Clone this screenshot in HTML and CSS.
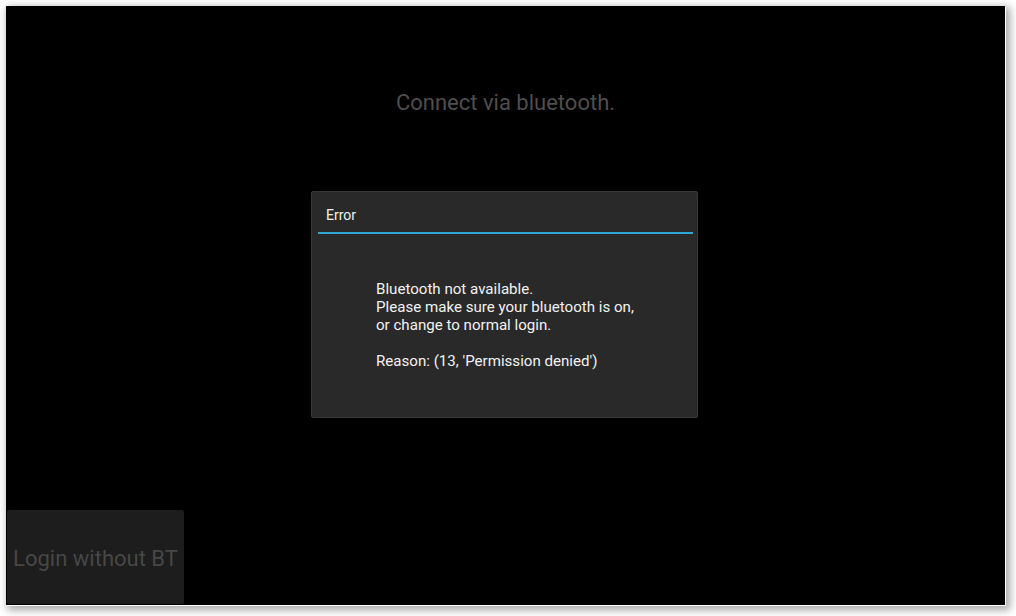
FILE: index.html
```html
<!DOCTYPE html>
<html>
<head>
<meta charset="utf-8">
<link rel="stylesheet" href="styles.css">
</head>
<body>
<div class="window">
  <div class="heading">Connect via bluetooth.</div>
  <div class="spacer"></div>
  <div class="footer">
    <button class="login-btn">Login without BT</button>
  </div>
  <div class="popup">
    <div class="popup-title">Error</div>
    <div class="popup-sep"></div>
    <div class="popup-body">
      <p>Bluetooth not available.<br>Please make sure your bluetooth is on,<br>or change to normal login.</p>
      <p>Reason: (13, 'Permission denied')</p>
    </div>
  </div>
</div>
</body>
</html>
```
FILE: styles.css
```css
html, body {
  margin: 0;
  padding: 0;
  background: #ffffff;
}
body {
  width: 1016px;
  height: 616px;
  overflow: hidden;
  font-family: Roboto, "Noto Sans", sans-serif;
}
.window {
  position: relative;
  margin: 6px 0 0 6px;
  width: 999px;
  height: 599px;
  background: #000;
  display: flex;
  flex-direction: column;
  box-shadow: 1px 1px 0 0 #ffffff, 3px 3px 8px 2px rgba(0,0,0,0.35);
}
.heading {
  margin-top: 82px;
  text-align: center;
  font-size: 22px;
  line-height: 30px;
  color: #4e4e4e;
}
.spacer { flex: 1; }
.footer {
  display: flex;
  padding: 0 0 1px 1px;
}
.login-btn {
  width: 177px;
  height: 94px;
  margin: 0;
  padding: 2px 0 0 0;
  border: none;
  border-radius: 2px;
  background: #1d1d1d;
  color: #474747;
  font-family: Roboto, "Noto Sans", sans-serif;
  font-size: 22px;
}
.popup {
  position: absolute;
  left: 305px;
  top: 185px;
  width: 375px;
  height: 225px;
  background: #292929;
  border: 1px solid #383838;
  border-radius: 2px;
  display: flex;
  flex-direction: column;
  padding: 0 4px 0 6px;
}
.popup-title {
  color: #f0f0f0;
  font-size: 14px;
  line-height: 18px;
  padding: 14px 0 8px 8px;
}
.popup-sep {
  height: 2px;
  background: #2fa7d4;
}
.popup-body {
  flex: 1;
  padding: 46px 0 0 58px;
  color: #f2f2f2;
  font-size: 15.1px;
  line-height: 18px;
}
.popup-body p {
  margin: 0 0 18px 0;
}
```
